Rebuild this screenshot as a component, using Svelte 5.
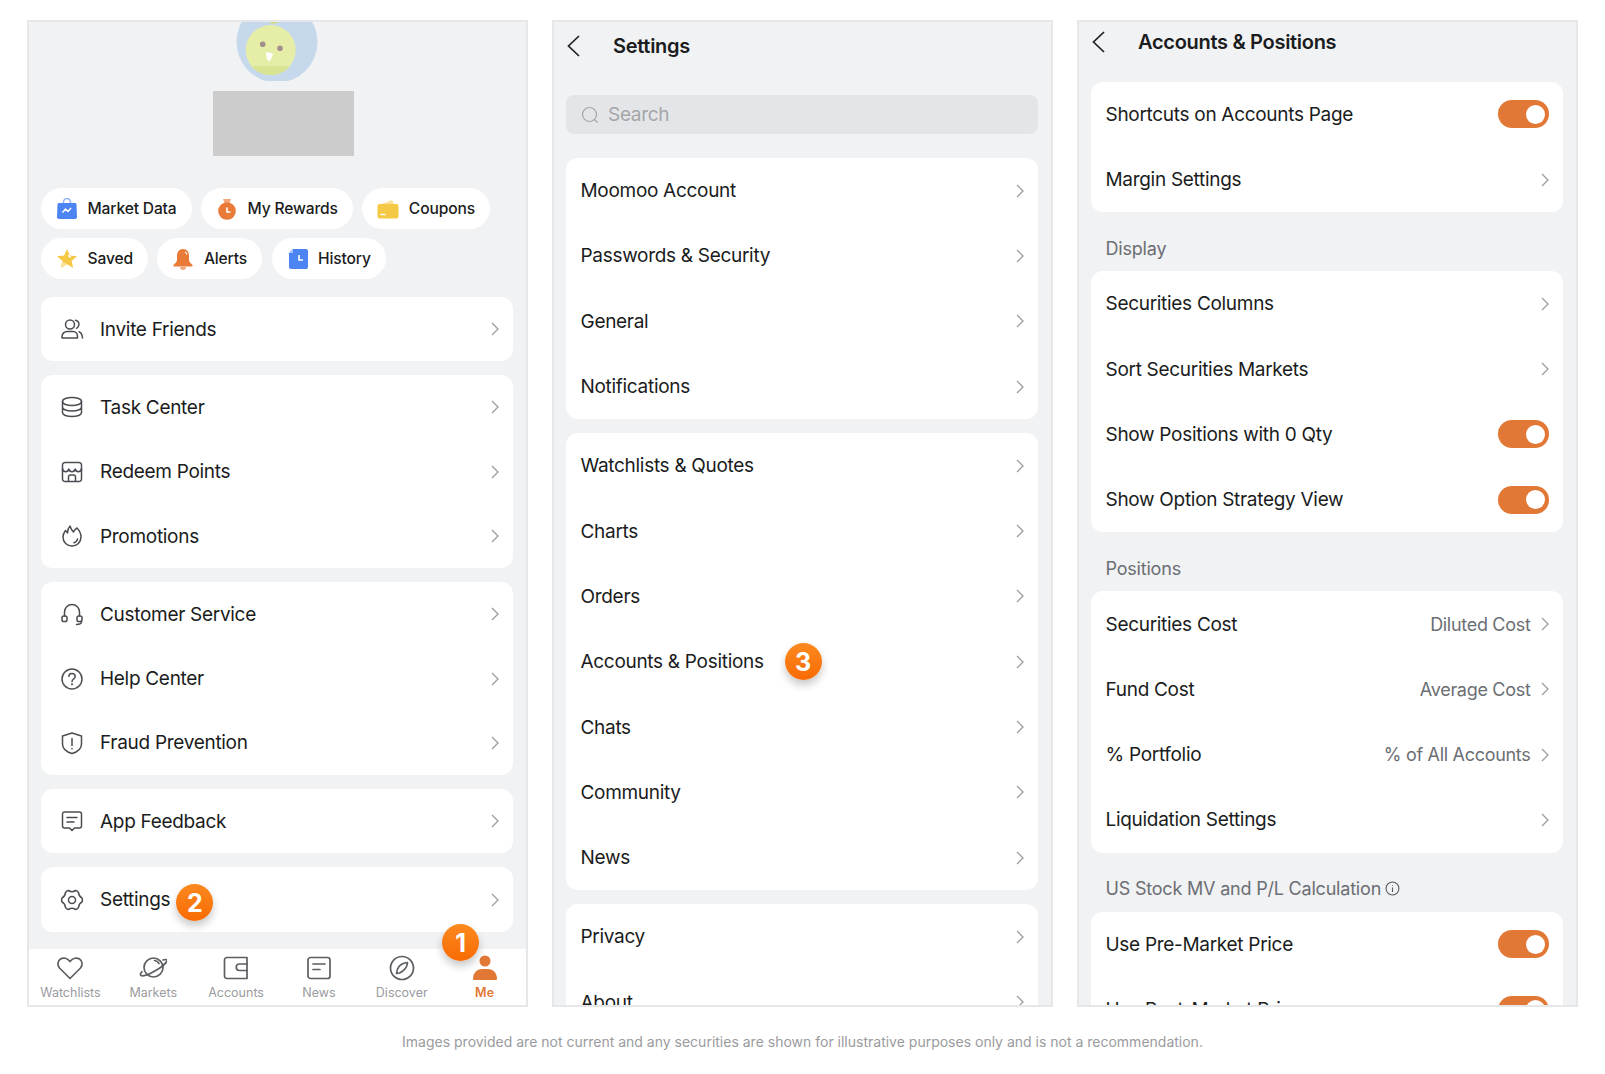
<script lang="ts">
  const menuGroups = [
    [{ label: 'Invite Friends', icon: 'friends' }],
    [
      { label: 'Task Center', icon: 'task' },
      { label: 'Redeem Points', icon: 'store' },
      { label: 'Promotions', icon: 'flame' },
    ],
    [
      { label: 'Customer Service', icon: 'headset' },
      { label: 'Help Center', icon: 'help' },
      { label: 'Fraud Prevention', icon: 'shield' },
    ],
    [{ label: 'App Feedback', icon: 'feedback' }],
    [{ label: 'Settings', icon: 'gear', badge: 2 }],
  ];

  const chipRows = [
    [
      { label: 'Market Data', icon: 'bag' },
      { label: 'My Rewards', icon: 'pouch' },
      { label: 'Coupons', icon: 'wallet' },
    ],
    [
      { label: 'Saved', icon: 'star' },
      { label: 'Alerts', icon: 'bell' },
      { label: 'History', icon: 'doc' },
    ],
  ];

  const tabs = [
    { label: 'Watchlists', icon: 'heart' },
    { label: 'Markets', icon: 'planet' },
    { label: 'Accounts', icon: 'purse' },
    { label: 'News', icon: 'news' },
    { label: 'Discover', icon: 'compass' },
    { label: 'Me', icon: 'me', active: true },
  ];

  const settingsGroups = [
    ['Moomoo Account', 'Passwords & Security', 'General', 'Notifications'],
    ['Watchlists & Quotes', 'Charts', 'Orders', 'Accounts & Positions', 'Chats', 'Community', 'News'],
    ['Privacy', 'About'],
  ];

  const accountSections = [
    {
      rows: [
        { label: 'Shortcuts on Accounts Page', toggle: true },
        { label: 'Margin Settings' },
      ],
    },
    {
      title: 'Display',
      rows: [
        { label: 'Securities Columns' },
        { label: 'Sort Securities Markets' },
        { label: 'Show Positions with 0 Qty', toggle: true },
        { label: 'Show Option Strategy View', toggle: true },
      ],
    },
    {
      title: 'Positions',
      rows: [
        { label: 'Securities Cost', value: 'Diluted Cost' },
        { label: 'Fund Cost', value: 'Average Cost' },
        { label: '% Portfolio', value: '% of All Accounts' },
        { label: 'Liquidation Settings' },
      ],
    },
    {
      title: 'US Stock MV and P/L Calculation',
      info: true,
      rows: [
        { label: 'Use Pre-Market Price', toggle: true },
        { label: 'Use Post-Market Price', toggle: true },
      ],
    },
  ];
</script>

{#snippet chevron()}
  <svg class="chevron" viewBox="0 0 8 14" width="8" height="14" fill="none" stroke="#9b9c9e" stroke-width="1.3">
    <path d="M1 1l6 6-6 6" />
  </svg>
{/snippet}

{#snippet back()}
  <svg viewBox="0 0 14 22" width="14" height="22" fill="none" stroke="#1d1f23" stroke-width="1.7">
    <path d="M13 1L2.5 11 13 21" />
  </svg>
{/snippet}

{#snippet badge(n)}
  <span class="badge">{n}</span>
{/snippet}

{#snippet toggle()}
  <span class="toggle"><span class="knob"></span></span>
{/snippet}

{#snippet lineIcon(name)}
  <svg viewBox="0 0 24 24" width="24" height="24" fill="none" stroke="#4a4d52" stroke-width="1.5" stroke-linecap="round" stroke-linejoin="round">
    {#if name === 'friends'}
      <circle cx="10" cy="7.5" r="4.5" />
      <path d="M2 21v-1.500C2 16.500 4.500 14.500 7 14.500h6c2.500 0 4.500 2 4.500 5V21zM15.500 3.300c2.400.6 3.600 2.400 3.400 4.500-.2 1.600-1 2.800-2.400 3.500M19 14.800c2 .8 3.300 2.500 3.500 6.200" />
    {:else if name === 'task'}
      <path d="M2.500 6.500C2.500 4 7 2.500 12 2.500S21.500 4 21.500 6.500 17 10.500 12 10.500 2.500 9 2.500 6.500z" />
      <path d="M2.500 6.500v11c0 2.500 4.500 4 9.500 4s9.500-1.500 9.500-4v-11M2.500 12c0 2.500 4.500 4 9.500 4s9.500-1.500 9.500-4" />
    {:else if name === 'store'}
      <path d="M2.500 9V5A2.500 2.500 0 0 1 5 2.500h14A2.500 2.500 0 0 1 21.500 5v4" />
      <path d="M2.500 9c1 3.500 5.500 3.500 6.300 0 .8 3.500 5.600 3.500 6.400 0 .8 3.500 5.300 3.500 6.300 0" />
      <path d="M2.500 9v10A2.500 2.500 0 0 0 5 21.500h14a2.500 2.500 0 0 0 2.500-2.500V9M8.500 21.500v-4.500A2 2 0 0 1 10.500 15h3a2 2 0 0 1 2 2v4.500" />
    {:else if name === 'flame'}
      <path d="M3 13c0-2.500 1-4.500 2.500-6.500.8.8 1.500 1.500 2 2.500 0-3 .6-5 2.500-7 .8 2.500 2 4.500 3.500 6 .6-1.500 1.500-2.800 3.500-4 2.300 2.500 4 5 4 9 0 5.500-4 9-9 9s-9-3.500-9-9z" />
      <path d="M17.500 15c-.3 1.800-1.500 3.200-3.500 3.800" />
    {:else if name === 'headset'}
      <path d="M4.500 14V10a7.500 7.500 0 0 1 15 0v4" />
      <rect x="2" y="14" width="5" height="5.500" rx="1.800" />
      <rect x="17" y="14" width="5" height="5.500" rx="1.800" />
      <path d="M21.500 19.500c0 2-1.500 3-5 3" />
    {:else if name === 'help'}
      <circle cx="12" cy="12" r="10" />
      <path d="M8.800 9.300A3.200 3.200 0 0 1 12 6.500c1.800 0 3.200 1.200 3.200 2.900 0 2.600-3.200 2.600-3.200 5" />
      <circle cx="12" cy="17.300" r=".4" />
    {:else if name === 'shield'}
      <path d="M12 2l9.500 3v8c0 5-4 8-9.500 9.500C6.500 21 2.500 18 2.500 13V5z" />
      <path d="M12 7.500v7M12 17.500v.3" />
    {:else if name === 'feedback'}
      <path d="M4.500 3h15A2 2 0 0 1 21.500 5v12a2 2 0 0 1-2 2h-5L12 21.500 9.500 19h-5a2 2 0 0 1-2-2V5a2 2 0 0 1 2-2z" />
      <path d="M7 8.500h10M7 13h7" />
    {:else if name === 'gear'}
      <path d="M8.500 2.500c2.300 1.500 4.700 1.500 7 0 1.200.2 2.400 1.100 3 2.100.2 2.500 1.500 4.400 3.600 5.500.4 1.200.4 2.600 0 3.800-2.100 1.100-3.400 3-3.600 5.500-.6 1-1.800 1.900-3 2.100-2.300-1.500-4.700-1.500-7 0-1.200-.2-2.400-1.100-3-2.100-.2-2.500-1.500-4.400-3.600-5.500-.4-1.200-.4-2.600 0-3.800C4 9 5.300 7.100 5.500 4.600c.6-1 1.800-1.900 3-2.100z" />
      <circle cx="12" cy="12" r="3.500" />
    {/if}
  </svg>
{/snippet}

{#snippet chipIcon(name)}
  <svg viewBox="0 0 22 22" width="22" height="22">
    {#if name === 'bag'}
      <path d="M7.500 5V4a3.500 3.500 0 0 1 7 0v1" fill="none" stroke="#8fb2f6" stroke-width="1.500" />
      <path d="M3 5h16c1 0 1.500.6 1.500 1.500l.5 12.500c0 1.300-.8 2-2 2H3c-1.200 0-2-.7-2-2l.5-12.500C1.500 5.600 2 5 3 5z" fill="#4c84f2" />
      <path d="M6.500 14.500l3-3.500 2.500 2.500 3-3.500" fill="none" stroke="#fff" stroke-width="1.500" />
    {:else if name === 'pouch'}
      <path d="M7 1h8l-1.500 4h-5z" fill="#f2a67a" />
      <circle cx="11" cy="13" r="8.800" fill="#e97a37" />
      <path d="M11 9.500V14h3.500" fill="none" stroke="#fff" stroke-width="1.600" />
    {:else if name === 'wallet'}
      <path d="M2 7l13-5 2 4z" fill="#fae19a" />
      <rect x="0.500" y="6" width="21" height="14.500" rx="2" fill="#f5c945" />
      <path d="M3.500 16.500h5" stroke="#fff" stroke-width="1.500" />
    {:else if name === 'star'}
      <path d="M11 1l2.800 6.500 7.200.7-5.400 4.800 1.600 7L11 16.300 4.800 20l1.600-7L1 8.200l7.200-.7z" fill="#f5c945" />
      <path d="M4.800 20l1.600-7 4.600 3.300z" fill="#fae19a" />
      <path d="M12 7.500l3 1.500" stroke="#fff" stroke-width="1.400" />
    {:else if name === 'bell'}
      <path d="M8 19a3 3 0 0 0 6 0z" fill="#f2a67a" />
      <path d="M11 1c4 0 6 3 6 7v4c0 2 2 3.500 3.500 5 .4.800 0 1.500-.8 1.500H2.300c-.8 0-1.200-.7-.8-1.500C3 15.500 5 14 5 12V8c0-4 2-7 6-7z" fill="#e97a37" />
      <path d="M13 4c1 .5 1.700 1.500 2 2.500" stroke="#fff" stroke-width="1.200" fill="none" />
    {:else if name === 'doc'}
      <path d="M6 1h13a2 2 0 0 1 2 2v16a2 2 0 0 1-2 2H4a2 2 0 0 1-2-2V5z" fill="#4c84f2" />
      <path d="M6 1v4H2z" fill="#a5c2f8" />
      <path d="M12 7v5h4" fill="none" stroke="#fff" stroke-width="1.600" />
    {/if}
  </svg>
{/snippet}

{#snippet tabIcon(name)}
  <svg viewBox="0 0 28 28" width="28" height="28" fill="none" stroke="#5b5e62" stroke-width="1.700" stroke-linecap="round" stroke-linejoin="round">
    {#if name === 'heart'}
      <path d="M14 24.500L3.500 14C1 11 1.500 7 4.500 5c2.800-1.800 6.800-1 9.500 2.500C16.700 4 20.700 3.200 23.500 5c3 2 3.500 6 1 9z" />
    {:else if name === 'planet'}
      <circle cx="14.500" cy="13.500" r="9.500" />
      <path d="M24 6c2.500-.8 3.500-.6 3.800.2.500 1.700-4 6-10.300 9.800C11 20 4.500 22.500 2 21.500c-1-.5-.6-2 .8-3.800" />
      <path d="M15.500 6.500c2 .3 3.500 1.300 4.500 3" />
    {:else if name === 'purse'}
      <path d="M5 3.500h20v21H5A2.500 2.500 0 0 1 2.500 22V6A2.500 2.500 0 0 1 5 3.500z" />
      <path d="M25 10h-7.500a3.200 3.200 0 0 0 0 6.500H25" />
    {:else if name === 'news'}
      <rect x="3" y="3.500" width="22" height="21" rx="2.500" />
      <path d="M8 10h12M8 15.500h7" />
    {:else if name === 'compass'}
      <circle cx="14" cy="14" r="11.500" />
      <path d="M19.500 8.500c-.3 4-2.500 8-8 10.500l-3 .500c.3-4.500 3-9 8-10.500z" />
    {:else if name === 'me'}
      <circle cx="14" cy="7" r="5.500" fill="#e27835" stroke="none" />
      <path d="M2 25c0-6 4-10 9-10h6c5 0 9 4 9 10 0 .5-.5 1-1 1H3c-.5 0-1-.5-1-1z" fill="#e27835" stroke="none" />
    {/if}
  </svg>
{/snippet}

<div class="page">
  <div class="panels">
    <section class="panel me">
      <div class="scroll">
        <div class="avatar">
          <svg viewBox="0 20 82 60" width="82" height="60">
            <circle cx="41" cy="40" r="40.500" fill="#c6d8ec" />
            <path d="M33 22c4 0 8-1 10-2h-6c-1 0-3 1-4 2z" fill="#d2dc7e" />
            <circle cx="34.700" cy="48" r="25" fill="#e6eda6" />
            <path d="M15 64h39c-5 6-12 9-19 9s-15-3-20-9z" fill="#d9e492" />
            <circle cx="26.700" cy="42.300" r="2.800" fill="#a08f8a" />
            <circle cx="44" cy="46.300" r="2.800" fill="#a08f8a" />
            <path d="M30 50l7 1.500c-.5 3-2 6-4 8-2-1-3-5-3-9.500z" fill="#fff" />
          </svg>
        </div>
        <div class="redacted"></div>
        <div class="chips">
          {#each chipRows as chips}
            <div class="chip-row">
              {#each chips as chip}
                <span class="chip">
                  {@render chipIcon(chip.icon)}
                  {chip.label}
                </span>
              {/each}
            </div>
          {/each}
        </div>
        <div class="cards">
          {#each menuGroups as group}
            <div class="card">
              {#each group as item}
                <div class="row menu-row">
                  <span class="row-icon">{@render lineIcon(item.icon)}</span>
                  <span class="label">{item.label}</span>
                  {#if item.badge}
                    <span class="badge-2">{@render badge(item.badge)}</span>
                  {/if}
                  <span class="spacer"></span>
                  {@render chevron()}
                </div>
              {/each}
            </div>
          {/each}
        </div>
      </div>
      <nav class="tabs">
        {#each tabs as tab}
          <div class="tab" class:active={tab.active}>
            {#if tab.active}
              <span class="badge-1">{@render badge(1)}</span>
            {/if}
            {@render tabIcon(tab.icon)}
            <span>{tab.label}</span>
          </div>
        {/each}
      </nav>
    </section>

    <section class="panel">
      <header class="head settings-head">
        {@render back()}
        <h1>Settings</h1>
      </header>
      <div class="search">
        <svg viewBox="0 0 18 18" width="18" height="18" fill="none" stroke="#a4a6a9" stroke-width="1.200">
          <circle cx="8.500" cy="8.500" r="7" />
          <path d="M13.500 13.500l3 3" />
        </svg>
        <span>Search</span>
      </div>
      <div class="cards">
        {#each settingsGroups as group}
          <div class="card">
            {#each group as label}
              <div class="row">
                <span class="label">{label}</span>
                {#if label === 'Accounts & Positions'}
                  <span class="badge-3">{@render badge(3)}</span>
                {/if}
                <span class="spacer"></span>
                {@render chevron()}
              </div>
            {/each}
          </div>
        {/each}
      </div>
    </section>

    <section class="panel">
      <header class="head accounts-head">
        {@render back()}
        <h1>Accounts &amp; Positions</h1>
      </header>
      {#each accountSections as section}
        {#if section.title}
          <h2 class="section-title">
            {section.title}
            {#if section.info}
              <svg viewBox="0 0 14 14" width="15" height="15" fill="none" stroke="#55585c" stroke-width="1">
                <circle cx="7" cy="7" r="6" />
                <path d="M7 6v4.200M7 3.700v.8" />
              </svg>
            {/if}
          </h2>
        {/if}
        <div class="card">
          {#each section.rows as row}
            <div class="row">
              <span class="label">{row.label}</span>
              <span class="spacer"></span>
              {#if row.toggle}
                {@render toggle()}
              {:else}
                {#if row.value}
                  <span class="value">{row.value}</span>
                {/if}
                {@render chevron()}
              {/if}
            </div>
          {/each}
        </div>
      {/each}
    </section>
  </div>
  <p class="note">Images provided are not current and any securities are shown for illustrative purposes only and is not a recommendation.</p>
</div>

<style>
  :global(body) {
    background: #fff;
    font-family: Inter, "Liberation Sans", sans-serif;
  }

  .page {
    width: 1605px;
    height: 1074px;
    padding-top: 20px;
    box-sizing: border-box;
    overflow: hidden;
  }

  .panels {
    display: flex;
    gap: 24px;
    padding-left: 27px;
  }

  .panel {
    width: 501px;
    height: 987px;
    box-sizing: border-box;
    border: 2px solid #e6e7e9;
    background: #f1f2f4;
    overflow: hidden;
    padding: 0 13px 0 12px;
    display: flex;
    flex-direction: column;
  }

  .panel.me {
    padding: 0;
  }

  .scroll {
    flex: 1;
    min-height: 0;
    padding: 0 13px 0 12px;
  }

  .avatar {
    display: flex;
    justify-content: center;
    height: 59px;
    overflow: hidden;
  }

  .redacted {
    width: 141px;
    height: 65px;
    margin: 10px 0 0 172px;
    background: #cccccc;
  }

  .chips {
    display: flex;
    flex-direction: column;
    gap: 9px;
    margin: 32px 0 18px;
  }

  .chip-row {
    display: flex;
    gap: 9.5px;
  }

  .chip {
    height: 41px;
    box-sizing: border-box;
    display: inline-flex;
    align-items: center;
    gap: 9.5px;
    padding: 0 15px;
    border-radius: 21px;
    background: #fff;
    font-size: 15.6px;
    font-weight: 500;
    letter-spacing: -0.15px;
    color: #1a1c20;
  }

  .cards {
    display: flex;
    flex-direction: column;
    gap: 14px;
  }

  .card {
    background: #fff;
    border-radius: 12px;
    flex: none;
  }

  .row {
    height: 65.3px;
    box-sizing: border-box;
    padding: 0 14.5px;
    display: flex;
    align-items: center;
    font-size: 19px;
    letter-spacing: -0.3px;
    color: #1a1c20;
  }

  .menu-row {
    height: 64.3px;
    padding-left: 19px;
  }

  .row-icon {
    display: flex;
    margin-right: 16px;
  }

  .spacer {
    flex: 1;
  }

  .chevron {
    flex: none;
  }

  .value {
    color: #6b6e73;
    font-size: 18px;
    letter-spacing: -0.3px;
    margin-right: 10px;
  }

  .toggle {
    width: 51px;
    height: 28px;
    border-radius: 14px;
    background: #e27835;
    display: flex;
    align-items: center;
    justify-content: flex-end;
    padding-right: 4px;
    box-sizing: border-box;
    margin-right: -0.5px;
  }

  .knob {
    width: 19px;
    height: 19px;
    border-radius: 50%;
    background: #fff;
  }

  .badge {
    display: flex;
    align-items: center;
    justify-content: center;
    width: 37px;
    height: 37px;
    border-radius: 50%;
    background: linear-gradient(180deg, #fb8a20, #f96a03);
    box-shadow: 0 5px 8px rgba(0, 0, 0, 0.22);
    color: #fff;
    font-size: 25px;
    font-weight: 700;
    letter-spacing: 0;
  }

  .badge-2 {
    margin-left: 6px;
    transform: translateY(3px);
  }

  .badge-3 {
    margin-left: 21px;
  }

  .badge-1 {
    position: absolute;
    left: -1px;
    top: -25px;
    font-weight: 700;
  }

  .tabs {
    flex: none;
    height: 56px;
    background: #fff;
    display: grid;
    grid-template-columns: repeat(6, 1fr);
  }

  .tab {
    position: relative;
    display: flex;
    flex-direction: column;
    align-items: center;
    padding-top: 5px;
    gap: 3px;
    font-size: 12.5px;
    color: #9a9b9e;
  }

  .tab.active {
    color: #e27835;
    font-weight: 600;
  }

  .head {
    display: flex;
    align-items: center;
    flex: none;
  }

  .head :global(svg) {
    margin-left: 0;
  }

  h1 {
    margin: 0 0 0 33px;
    font-size: 20px;
    font-weight: 600;
    letter-spacing: -0.3px;
    color: #1a1c20;
  }

  .settings-head {
    height: 48px;
  }

  .accounts-head {
    height: 40px;
    margin-bottom: 19.6px;
  }

  .search {
    flex: none;
    height: 39px;
    margin: 25px 0 24px;
    border-radius: 8px;
    background: #e4e5e8;
    display: flex;
    align-items: center;
    gap: 9px;
    padding: 0 15px;
    color: #a4a6a9;
    font-size: 19px;
    letter-spacing: -0.3px;
  }

  .section-title {
    margin: 0;
    flex: none;
    height: 59px;
    padding: 13px 14.5px 0;
    box-sizing: border-box;
    display: flex;
    align-items: center;
    gap: 4px;
    font-size: 18px;
    font-weight: 400;
    letter-spacing: -0.2px;
    color: #6b6e73;
  }

  .note {
    margin: 26px 0 0;
    text-align: center;
    font-size: 14px;
    letter-spacing: 0;
    color: #9a9b9e;
  }
</style>
